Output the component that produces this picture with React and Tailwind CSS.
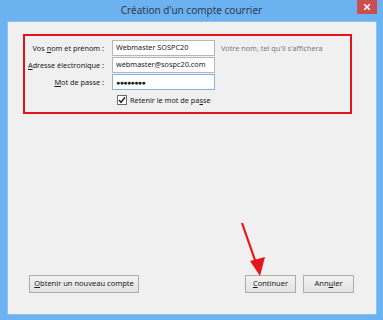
import React from "react";

const font = { fontFamily: '"Noto Sans", "Open Sans", sans-serif' };

function Input({ value, focused, password }) {
  return (
    <div
      className={`h-[16px] w-[103px] border bg-white flex items-center pl-[3px] text-[7.3px] text-[#1a1a1a] leading-none whitespace-nowrap overflow-hidden ${
        focused ? "border-[#7eb4ea]" : "border-[#b5b7bd]"
      }`}
    >
      {password ? (
        <span className="tracking-[-0.6px] text-[7px]">●●●●●●●●</span>
      ) : (
        value
      )}
    </div>
  );
}

function Button({ children, className = "" }) {
  return (
    <div
      className={`h-[18px] border border-[#adadad] bg-gradient-to-b from-[#f2f2f2] to-[#e3e3e3] flex items-center justify-center text-[7.5px] text-[#1a1a1a] whitespace-nowrap ${className}`}
    >
      {children}
    </div>
  );
}

export default function App() {
  return (
    <div
      className="relative w-[383px] h-[320px] bg-[#6cb2f1] flex flex-col pl-[7px] pr-[6px] pb-[5px]"
      style={font}
    >
      {/* title bar */}
      <div className="h-[21px] -ml-[7px] -mr-[6px] grid grid-cols-[1fr_auto_1fr] items-start">
        <div />
        <div className="text-[10px] text-[#2b3a4d] pt-[5px] leading-none whitespace-nowrap">
          Création d'un compte courrier
        </div>
        <div className="flex justify-end pr-[6px]">
          <div className="w-[20px] h-[14px] bg-[#c9504f] flex items-center justify-center">
            <svg width="8" height="8" viewBox="0 0 8 8">
              <path d="M1.2 1.2 L6.8 6.8 M6.8 1.2 L1.2 6.8" stroke="white" strokeWidth="1.6" />
            </svg>
          </div>
        </div>
      </div>

      {/* client */}
      <div className="flex-1 bg-[#f0f0f0] border border-[#8fc3f2] flex flex-col">
        <div className="ml-[15px] mt-[12px] w-[329px] h-[80px] border-2 border-[#e2141b] pt-[4px] flex flex-col gap-[1px]">
          <div className="flex items-center">
            <div className="w-[79px] text-right text-[7.3px] text-[#1a1a1a] whitespace-nowrap">
              Vos <u>n</u>om et prénom :
            </div>
            <div className="ml-[8px]">
              <Input value="Webmaster SOSPC20" />
            </div>
            <div className="ml-[6px] text-[7.3px] text-[#7a7a7a] whitespace-nowrap">
              Votre nom, tel qu'il s'affichera
            </div>
          </div>
          <div className="flex items-center">
            <div className="w-[79px] text-right text-[7.3px] text-[#1a1a1a] whitespace-nowrap">
              <u>A</u>dresse électronique :
            </div>
            <div className="ml-[8px]">
              <Input value="webmaster@sospc20.com" />
            </div>
          </div>
          <div className="flex items-center">
            <div className="w-[79px] text-right text-[7.3px] text-[#1a1a1a] whitespace-nowrap">
              <u>M</u>ot de passe :
            </div>
            <div className="ml-[8px]">
              <Input focused password />
            </div>
          </div>
          <div className="flex items-center mt-[4px] ml-[92px]">
            <div className="w-[10px] h-[10px] border border-[#6d6d6d] bg-white flex items-center justify-center">
              <svg width="8" height="8" viewBox="0 0 8 8">
                <path d="M1 4 L3 6.3 L7 1.3" stroke="#222" strokeWidth="1.4" fill="none" />
              </svg>
            </div>
            <div className="ml-[3px] text-[7.3px] text-[#1a1a1a] whitespace-nowrap">
              Retenir le mot de pa<u>s</u>se
            </div>
          </div>
        </div>

        <div className="flex-1" />

        <div className="flex items-center mb-[21px] pl-[21px] pr-[22px]">
          <Button className="w-[110px]">
            <span>
              <u>O</u>btenir un nouveau compte
            </span>
          </Button>
          <div className="flex-1" />
          <Button className="w-[51px]">
            <span>
              <u>C</u>ontinuer
            </span>
          </Button>
          <Button className="w-[51px] ml-[7px]">
            <span>
              Ann<u>u</u>ler
            </span>
          </Button>
        </div>
      </div>

      {/* red arrow annotation */}
      <svg
        className="absolute left-0 top-0 pointer-events-none"
        width="383"
        height="320"
        viewBox="0 0 383 320"
      >
        <line x1="242" y1="223" x2="256" y2="263" stroke="#e8141b" strokeWidth="2.2" />
        <polygon points="260,276 250,261 265,257" fill="#e8141b" />
      </svg>
    </div>
  );
}
